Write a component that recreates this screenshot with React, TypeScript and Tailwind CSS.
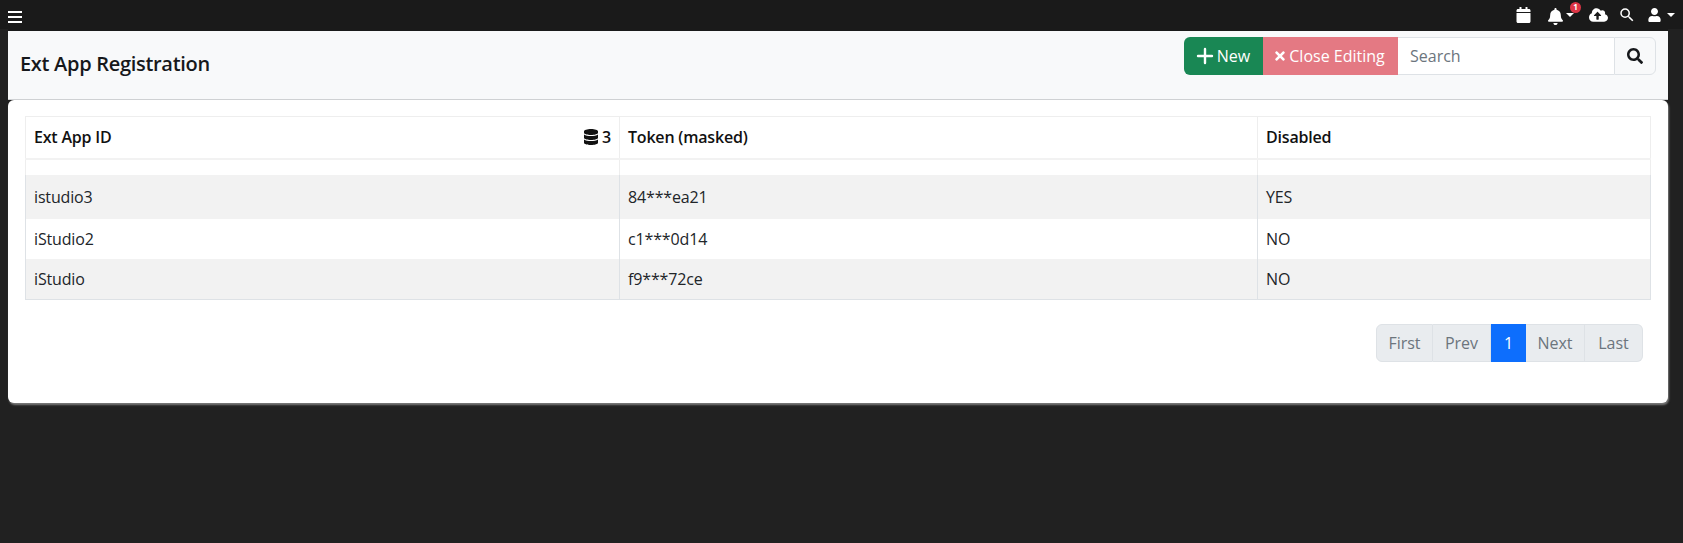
import { FaBell, FaCalendar, FaCloudUploadAlt, FaDatabase, FaSearch, FaTimes, FaUser } from "react-icons/fa";
import { MdSearch } from "react-icons/md";
import { Plus } from "lucide-react";

const rows = [
  { id: "istudio3", token: "84***ea21", disabled: "YES", cls: "h-[44px] bg-[#f2f2f2]" },
  { id: "iStudio2", token: "c1***0d14", disabled: "NO", cls: "h-10 bg-white" },
  { id: "iStudio", token: "f9***72ce", disabled: "NO", cls: "h-[41px] bg-[#f2f2f2] border-b border-[#dee2e6]" },
];

const pages = [
  { label: "First", cls: "w-[57px] rounded-l-md border border-[#dee2e6] bg-[#e9ecef] text-[#6c757d]" },
  { label: "Prev", cls: "w-[58px] border-y border-r border-[#dee2e6] bg-[#e9ecef] text-[#6c757d]" },
  { label: "1", cls: "w-[35px] bg-[#0d6efd] text-white" },
  { label: "Next", cls: "w-[59px] border-y border-r border-[#dee2e6] bg-[#e9ecef] text-[#6c757d]" },
  { label: "Last", cls: "w-[58px] rounded-r-md border-y border-r border-[#dee2e6] bg-[#e9ecef] text-[#6c757d]" },
];

function Caret() {
  return <span className="h-0 w-0 border-x-[4px] border-t-[4px] border-x-transparent border-t-white" />;
}

export default function App() {
  return (
    <div className="min-h-[543px] bg-[#212121] font-['Open_Sans',sans-serif] text-[16px] text-[#212529]">
      <nav className="flex h-[29px] items-center justify-between bg-[#1a1a1a] pl-2 pr-2 text-white">
        <svg viewBox="0 0 14 12" className="mt-[5px] h-3 w-[14px]" fill="currentColor">
          <rect width="14" height="2" />
          <rect y="5" width="14" height="2" />
          <rect y="10" width="14" height="2" />
        </svg>
        <div className="flex items-center">
          <FaCalendar className="h-[16px] w-[15px]" />
          <div className="relative ml-[16px] flex items-center gap-[2px]">
            <FaBell className="mt-[3px] h-[17px] w-[17px]" />
            <Caret />
            <span className="absolute -top-[3px] left-[23px] flex h-[11px] w-[11px] items-center justify-center rounded-full bg-[#dc3545] text-[8px] font-bold leading-none">
              1
            </span>
          </div>
          <FaCloudUploadAlt className="ml-[15px] h-[16px] w-[19px]" />
          <MdSearch className="ml-[10px] h-[18px] w-[18px]" />
          <div className="ml-[11px] flex items-center gap-[5px]">
            <FaUser className="h-[14px] w-[15px]" />
            <Caret />
          </div>
        </div>
      </nav>

      <div className="mx-2 w-[1660px]">
        <header className="flex h-[71px] items-start justify-between border-t-2 border-b border-t-[#1a1a1a] border-b-[#cfd1d3] bg-[#f8f9fa] pl-3 pr-3">
          <h1 className="mt-[18px] text-[20px] font-semibold tracking-[-0.3px] text-[#16181b]">Ext App Registration</h1>
          <div className="mt-[6px] flex h-[38px] items-center">
            <button className="flex h-full w-[79px] items-center justify-center rounded-l-md bg-[#198754] pr-1 text-white">
              <Plus className="h-6 w-6" strokeWidth={2.4} />
              New
            </button>
            <button className="flex h-full w-[135px] items-center justify-center gap-[3px] bg-[#e47983] pr-[2px] text-white">
              <FaTimes className="h-[14px] w-[12px]" />
              Close Editing
            </button>
            <input
              placeholder="Search"
              className="h-full w-[216px] border-y border-[#dee2e6] bg-white px-3 outline-none placeholder:text-[#6c757d]"
            />
            <button className="flex h-full w-[42px] items-center justify-center rounded-r-md border border-[#dee2e6] bg-[#f8f9fa] text-[#16181b]">
              <FaSearch className="h-4 w-4" />
            </button>
          </div>
        </header>

        <main className="h-[303px] rounded-md bg-white px-[17px] pt-4 shadow-[1px_2px_2px_#7a7a7a]">
          <table className="w-[1626px] table-fixed border-collapse">
            <colgroup>
              <col className="w-[594px]" />
              <col className="w-[638px]" />
              <col />
            </colgroup>
            <thead>
              <tr className="h-[42px] border-b-2 border-[#f2f2f2]">
                <th className="border border-[#eeeeee] px-2 text-left font-semibold tracking-[-0.2px] text-[#111]">
                  <div className="flex items-center justify-between">
                    <span>Ext App ID</span>
                    <span className="flex items-center gap-1">
                      <FaDatabase className="h-4 w-[14px]" />3
                    </span>
                  </div>
                </th>
                <th className="border border-[#eeeeee] px-2 text-left font-semibold tracking-[-0.2px] text-[#111]">Token (masked)</th>
                <th className="border border-[#eeeeee] px-2 text-left font-semibold tracking-[-0.2px] text-[#111]">Disabled</th>
              </tr>
            </thead>
            <tbody className="tracking-[-0.15px]">
              <tr className="h-[16px]">
                <td className="border-x border-[#eeeeee]" />
                <td className="border-x border-[#eeeeee]" />
                <td className="border-x border-[#eeeeee]" />
              </tr>
              {rows.map((row) => (
                <tr key={row.id} className={row.cls}>
                  <td className="border-x border-[#dee2e6] px-2">{row.id}</td>
                  <td className="border-x border-[#dee2e6] px-2">{row.token}</td>
                  <td className="border-x border-[#dee2e6] px-2">{row.disabled}</td>
                </tr>
              ))}
            </tbody>
          </table>
          <div className="mt-6 mr-2 flex h-[38px] justify-end">
            {pages.map((page) => (
              <span key={page.label} className={`flex items-center justify-center ${page.cls}`}>
                {page.label}
              </span>
            ))}
          </div>
        </main>
      </div>
    </div>
  );
}
